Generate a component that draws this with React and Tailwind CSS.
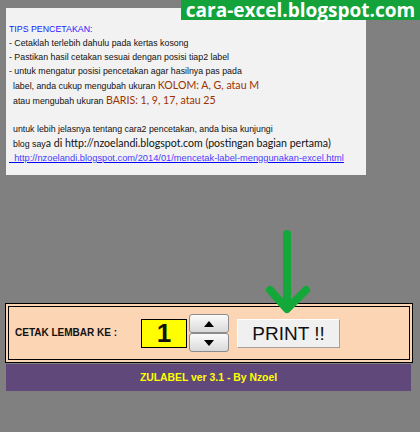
import { useState } from 'react';

const TAHOMA = { fontFamily: '"Liberation Sans", Arial, sans-serif' };

function Spinner({ onUp, onDown }) {
  const btn =
    'flex h-[19px] w-[40px] items-center justify-center rounded-[3px] border border-[#8c8c8c] bg-gradient-to-b from-[#fbfbfb] to-[#d9d9d9]';
  return (
    <div className="flex flex-col">
      <button type="button" onClick={onUp} className={btn}>
        <svg width="10" height="6" viewBox="0 0 10 6"><path d="M5 0 L10 6 L0 6 Z" fill="#000" /></svg>
      </button>
      <button type="button" onClick={onDown} className={btn}>
        <svg width="10" height="6" viewBox="0 0 10 6"><path d="M0 0 L10 0 L5 6 Z" fill="#000" /></svg>
      </button>
    </div>
  );
}

export default function App() {
  const [lembar, setLembar] = useState(1);

  return (
    <div
      className="relative h-[432px] w-[420px] overflow-hidden bg-[#808080] text-[8.8px] leading-[14px] text-[#111]"
      style={TAHOMA}
    >
      {/* tips panel */}
      <div className="ml-[6px] mt-[8px] h-[167px] w-[360px] bg-[#f2f2f2] pl-[3px] pt-[14px]">
        <div className="text-[#1a1aff]">TIPS PENCETAKAN:</div>
        <div>- Cetaklah terlebih dahulu pada kertas kosong</div>
        <div>- Pastikan hasil cetakan sesuai dengan posisi tiap2 label</div>
        <div>- untuk mengatur posisi pencetakan agar hasilnya pas pada</div>
        <div className="pl-[4px]">
          label, anda cukup mengubah ukuran{' '}
          <span className="font-['Lato',sans-serif] text-[10.6px] text-[#993300]">KOLOM: A, G, atau M</span>
        </div>
        <div className="pl-[4px]">
          atau mengubah ukuran{' '}
          <span className="font-['Lato',sans-serif] text-[10.6px] text-[#993300]">BARIS: 1, 9, 17, atau 25</span>
        </div>
        <div>&nbsp;</div>
        <div className="pl-[4px]">untuk lebih jelasnya tentang cara2 pencetakan, anda bisa kunjungi</div>
        <div className="pl-[4px]">
          blog say
          <span className="font-['Lato',sans-serif] text-[10.6px]">a di http://nzoelandi.blogspot.com (postingan bagian pertama)</span>
        </div>
        <div className="text-[9.3px] text-[#4b3cff] underline decoration-[#0000ff]">
          &nbsp;&nbsp;http://nzoelandi.blogspot.com/2014/01/mencetak-label-menggunakan-excel.html
        </div>
      </div>

      {/* print panel */}
      <div className="ml-[5px] mt-[128px] flex h-[60px] w-[408px] items-center border-[4px] border-double border-black bg-[#fcd5b4] pl-[6px]">
        <div className="w-[126px] text-[10px] font-bold">CETAK LEMBAR KE :</div>
        <div className="flex h-[29px] w-[46px] items-center justify-center border border-black bg-[#ffff00] text-[26px] font-bold leading-none">
          {lembar}
        </div>
        <div className="ml-[2px]">
          <Spinner onUp={() => setLembar(n => n + 1)} onDown={() => setLembar(n => Math.max(1, n - 1))} />
        </div>
        <button
          type="button"
          className="ml-[8px] flex h-[29px] w-[103px] items-center justify-center border border-t-white border-l-white border-r-[#a0a0a0] border-b-[#a0a0a0] bg-[#f0f0f0] text-[19px] leading-none"
        >
          PRINT !!
        </button>
      </div>

      {/* footer */}
      <div className="ml-[6px] mt-[1px] flex h-[27px] w-[405px] items-center justify-center bg-[#60497a] text-[10.4px] font-bold text-[#ffff00]">
        ZULABEL ver 3.1 - By Nzoel
      </div>

      {/* blog banner */}
      <div className="absolute right-0 top-0 flex h-[20px] w-[239px] items-center justify-center bg-[#14a33a] font-['Open_Sans',sans-serif] text-[19px] font-bold leading-[20px] text-white">
        cara-excel.blogspot.com
      </div>

      {/* arrow */}
      <svg className="absolute left-[262px] top-[228px]" width="52" height="90" viewBox="0 0 52 90">
        <g stroke="#14a83a" strokeWidth="8" strokeLinecap="round" strokeLinejoin="round" fill="none">
          <path d="M25 6 L25 80" />
          <path d="M8 62 L25 81 L44 62" />
        </g>
      </svg>
    </div>
  );
}
